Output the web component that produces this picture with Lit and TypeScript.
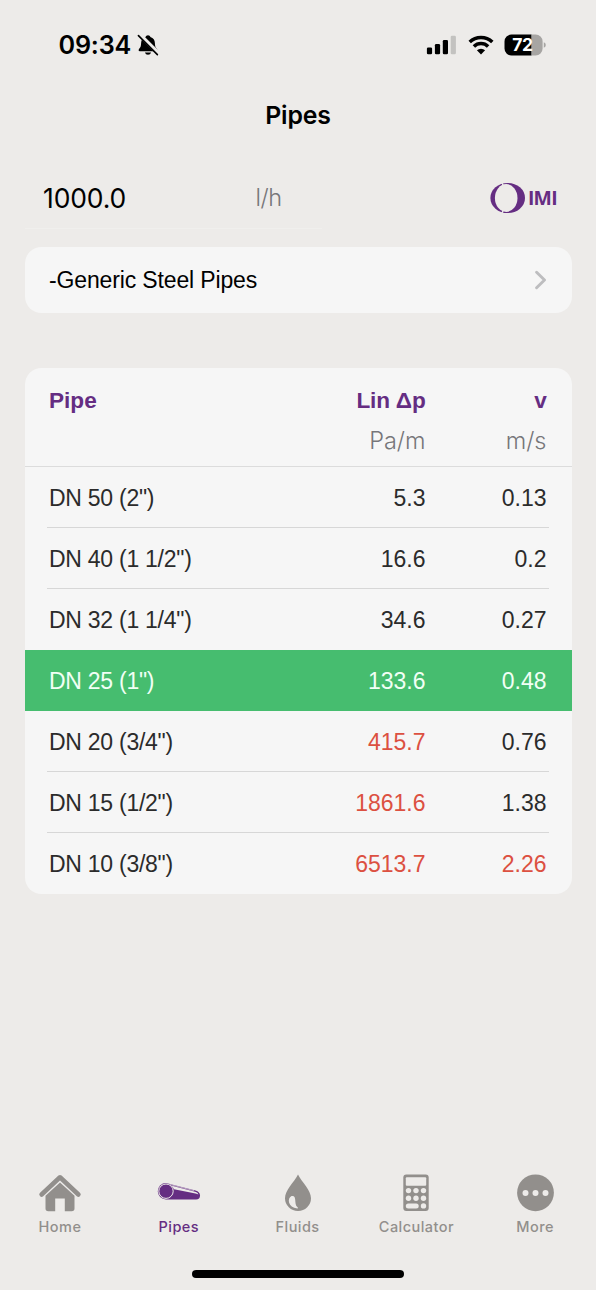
import { LitElement, html, css, svg } from "lit";
import { customElement, property } from "lit/decorators.js";
import { classMap } from "lit/directives/class-map.js";

interface PipeRow {
  name: string;
  drop: string;
  speed: string;
  dropHigh?: boolean;
  speedHigh?: boolean;
  selected?: boolean;
}

const ROWS: PipeRow[] = [
  { name: 'DN 50 (2")', drop: "5.3", speed: "0.13" },
  { name: 'DN 40 (1 1/2")', drop: "16.6", speed: "0.2" },
  { name: 'DN 32 (1 1/4")', drop: "34.6", speed: "0.27" },
  { name: 'DN 25 (1")', drop: "133.6", speed: "0.48", selected: true },
  { name: 'DN 20 (3/4")', drop: "415.7", speed: "0.76", dropHigh: true },
  { name: 'DN 15 (1/2")', drop: "1861.6", speed: "1.38", dropHigh: true },
  { name: 'DN 10 (3/8")', drop: "6513.7", speed: "2.26", dropHigh: true, speedHigh: true },
];

@customElement("status-bar")
class StatusBar extends LitElement {
  static styles = css`
    :host { display: flex; align-items: center; height: 89px; padding: 0 50px 0 58.500px; box-sizing: border-box; }
    .time { font: 600 25.200px/30px Inter, sans-serif; letter-spacing: -0.200px; width: 78px; white-space: nowrap; }
    svg { display: block; flex: none; }
    .signal { margin-left: auto; }
    .wifi { margin-left: 11.500px; }
    .battery { margin-left: 10.500px; }
    .level { font: 700 17.500px Inter, sans-serif; letter-spacing: -0.300px; }
  `;
  render() {
    return html`
      <span class="time">09:34</span>
      <svg width="22" height="22" viewBox="0 0 23 23">
        <path d="M11.5 1.2C10.2 1.2 9.3 2 9 3.1 5.8 4 4.4 6.500 4.300 9.500 4.200 13.500 3.400 14.200 2 15.900c-.7.9-.3 2.100.9 2.100h17.200c1.200 0 1.600-1.200.9-2.100-1.400-1.700-2.200-2.400-2.300-6.400C18.600 6.500 17.200 4 14 3.100 13.700 2 12.800 1.200 11.500 1.200zM8.300 19.300a3.300 3 0 0 0 6.400 0z"/>
        <path d="M2.600.6 22 20" stroke="#edebe9" stroke-width="4.400"/>
        <path d="M1.500 1.700 21.300 21.500" stroke="#000" stroke-width="1.700" stroke-linecap="round"/>
      </svg>
      <svg class="signal" width="30" height="20" viewBox="0 0 30 20">
        <rect x=".9" y="12.500" width="5.200" height="6.800" rx="1.300"/>
        <rect x="8.900" y="9" width="5.200" height="10.300" rx="1.300"/>
        <rect x="16.800" y="5" width="5.200" height="14.300" rx="1.300"/>
        <rect x="24.700" y=".8" width="5.200" height="18.500" rx="1.300" fill="#c3c2c0"/>
      </svg>
      <svg class="wifi" width="26" height="20" viewBox="0 0 26 20">
        <g fill="none" stroke="#000" stroke-width="3.500">
          <path d="M1.700 7.100a16.200 16.200 0 0 1 22.600 0"/>
          <path d="M5.900 11.500a10.200 10.200 0 0 1 14.200 0"/>
        </g>
        <path d="M13 19.500 8.900 15.300a6 6 0 0 1 8.200 0z"/>
      </svg>
      <svg class="battery" width="42" height="22" viewBox="0 0 42 22">
        <path d="M7.500.5H27.600v21H7.500a7 7 0 0 1-7-7v-7a7 7 0 0 1 7-7z"/>
        <path d="M27.600.5h4a7 7 0 0 1 7 7v7a7 7 0 0 1-7 7h-4zM39.800 8.200q2 .8 2 2.800t-2 2.800z" fill="#a7a5a3"/>
        <text class="level" x="8.200" y="17.300" fill="#fff">72</text>
      </svg>`;
  }
}

@customElement("pipe-table")
class PipeTable extends LitElement {
  @property({ attribute: false }) rows: PipeRow[] = [];
  static styles = css`
    :host { display: block; border-radius: 16.500px; background: #f6f6f6; overflow: hidden; font: 23px/30px "Liberation Sans", Arial, sans-serif; color: #2b2b2b; }
    .line { display: grid; grid-template-columns: 1fr 150px 121px; padding: 0 25px 0 24.500px; align-items: center; }
    .head { color: #652d82; font-weight: 700; font-size: 22.600px; padding-top: 18px; height: 31px; }
    .head .num { letter-spacing: -0.200px; }
    .units { color: #77767a; font: 300 23.500px/30px Inter, sans-serif; height: 49px; border-bottom: 1px solid #dcdcdc; }
    .row { height: 61px; box-sizing: border-box; padding-top: 1px; }
    .num { text-align: right; }
    .name { white-space: nowrap; letter-spacing: -0.260px; }
    .rule { height: 1px; margin: -1px 22.500px 0; background: #d7d7d7; }
    .high { color: #dc5041; }
    .selected { background: #46bd6f; color: #f1fff5; }
  `;
  render() {
    return html`
      <div class="line head"><span>Pipe</span><span class="num">Lin Δp</span><span class="num">v</span></div>
      <div class="line units"><span></span><span class="num">Pa/m</span><span class="num">m/s</span></div>
      ${this.rows.map((r, i) => html`
        ${i && !r.selected && !this.rows[i - 1].selected ? html`<div class="rule"></div>` : ""}
        <div class=${classMap({ line: true, row: true, selected: !!r.selected })}>
          <span class="name">${r.name}</span>
          <span class=${classMap({ num: true, high: !!r.dropHigh })}>${r.drop}</span>
          <span class=${classMap({ num: true, high: !!r.speedHigh })}>${r.speed}</span>
        </div>`)}`;
  }
}

const ICONS = {
  home: svg`
    <path d="M3.600 23.500 22 6.300 40.400 23.500" fill="none" stroke="currentColor" stroke-width="4.600" stroke-linecap="round" stroke-linejoin="round"/>
    <path d="M22 11.600 36.500 24.700V37.500a2.800 2.800 0 0 1-2.800 2.800H26.800V27.500H17.200V40.300H10.300A2.800 2.800 0 0 1 7.500 37.500V24.700z" fill="currentColor"/>`,
  pipes: svg`
    <path d="M9 12 38.500 19.500Q43 20.800 43 24.500 43 28.500 39 28.500H9A8.200 8.200 0 0 1 9 12z" fill="currentColor"/>
    <circle cx="9" cy="20.200" r="7.200" fill="none" stroke="#edebe9" stroke-width="1"/>
    <path d="M14 14.600 39 20.900Q41 21.500 41.400 23.500 40.500 22.700 38.500 22.400L17 18.300Q16.200 16 14 14.600z" fill="#edebe9"/>
    <path d="M13 13.500 37 19.700" stroke="#edebe9" stroke-width=".6"/>`,
  fluids: svg`
    <path fill-rule="evenodd" d="M22 3.500C18 11.500 9 19 9 27.300a13 12.700 0 0 0 26 0C35 19 26 11.500 22 3.500zM15.500 25C10.800 27.500 12 36.500 21.300 37.500 22.500 37.400 22 36.500 21.300 36 17.500 32.500 21.500 24 15.500 25z" fill="currentColor"/>`,
  calculator: svg`
    <rect x="9.300" y="3.500" width="25.400" height="36.500" rx="3" fill="currentColor"/>
    <g fill="#edebe9">
      <rect x="11.800" y="6.200" width="20.400" height="8.500" rx="1"/>
      ${[14.5, 22, 29.5].map((x) => svg`<circle cx=${x} cy="19.600" r="2.700"/><circle cx=${x} cy="27.300" r="2.700"/>`)}
      <rect x="11.800" y="32.400" width="12.900" height="5" rx="2.500"/>
      <circle cx="29.500" cy="34.900" r="2.700"/>
    </g>`,
  more: svg`
    <circle cx="22.500" cy="21.800" r="18.400" fill="currentColor"/>
    <g fill="#edebe9"><circle cx="12.500" cy="22" r="3"/><circle cx="22.500" cy="22" r="3"/><circle cx="32.500" cy="22" r="3"/></g>`,
};

@customElement("tab-bar")
class TabBar extends LitElement {
  static styles = css`
    :host { display: grid; grid-template-columns: repeat(5, 118.800px); justify-content: start; }
    .tab { display: flex; flex-direction: column; align-items: center; color: #928f8c; }
    .active { color: #652d82; }
    .label { font: 500 14.500px/20px Inter, sans-serif; letter-spacing: 0.450px; margin-top: 2.500px; }
    svg { display: block; }
  `;
  render() {
    const tabs = [
      ["Home", ICONS.home], ["Pipes", ICONS.pipes], ["Fluids", ICONS.fluids],
      ["Calculator", ICONS.calculator], ["More", ICONS.more],
    ] as const;
    return html`${tabs.map(([label, icon]) => html`
      <div class=${classMap({ tab: true, active: label === "Pipes" })}>
        <svg width="44" height="44" viewBox="0 0 44 44">${icon}</svg>
        <span class="label">${label}</span>
      </div>`)}`;
  }
}

@customElement("app-root")
class AppRoot extends LitElement {
  static styles = css`
    :host { display: flex; flex-direction: column; height: 1290px; background: #edebe9; color: #000; overflow: hidden; }
    .title { margin: 9px 0 0; text-align: center; font: 600 24.800px/34px Inter, sans-serif; letter-spacing: -0.100px; }
    .entry { display: flex; align-items: center; height: 60px; margin-top: 36px; padding: 0 39px 0 43px; }
    .value { font: 400 26.500px/32px Inter, sans-serif; width: 212.500px; letter-spacing: -0.150px; }
    .unit { font: 300 23.500px/32px Inter, sans-serif; color: #77767a; letter-spacing: -0.500px; }
    .logo { margin-left: auto; display: block; }
    .word { font: 700 19.400px "Open Sans", sans-serif; letter-spacing: -0.700px; }
    .underline { height: 1px; width: 297px; margin-left: 25px; background: #f0efed; }
    .picker { display: flex; align-items: center; justify-content: space-between; height: 66.500px; box-sizing: border-box; margin: 17.500px 24.500px 0; padding: 1px 24.500px 0; border-radius: 16.500px; background: #f6f6f6; font: 23px/30px "Liberation Sans", Arial, sans-serif; letter-spacing: -0.140px; }
    .picker svg { display: block; }
    pipe-table { margin: 54.500px 24.500px 0; }
    tab-bar { margin: auto 0 0 0.600px; }
    .homebar { width: 212px; height: 7.500px; border-radius: 4px; background: #000; margin: 33px auto 12.500px; }
  `;
  render() {
    return html`
      <status-bar></status-bar>
      <h1 class="title">Pipes</h1>
      <div class="entry">
        <span class="value">1000.0</span><span class="unit">l/h</span>
        <svg class="logo" width="67" height="32" viewBox="0 0 67 32">
          <ellipse cx="17.700" cy="16" rx="17.300" ry="15.100" fill="#652d82"/>
          <ellipse cx="16.200" cy="16" rx="11.300" ry="13.900" fill="#edebe9"/>
          <path d="M11.500 0 14 5M11.500 32 14 27" stroke="#edebe9" stroke-width="1.400"/>
          <text class="word" x="37.900" y="23" fill="#652d82">IMI</text>
        </svg>
      </div>
      <div class="underline"></div>
      <div class="picker">
        <span>-Generic Steel Pipes</span>
        <svg width="12" height="20" viewBox="0 0 12 20"><path d="M1.600 2.200 9.500 10 1.600 17.800" fill="none" stroke="#bdbdbf" stroke-width="2.900" stroke-linecap="round" stroke-linejoin="round"/></svg>
      </div>
      <pipe-table .rows=${ROWS}></pipe-table>
      <tab-bar></tab-bar>
      <div class="homebar"></div>`;
  }
}
